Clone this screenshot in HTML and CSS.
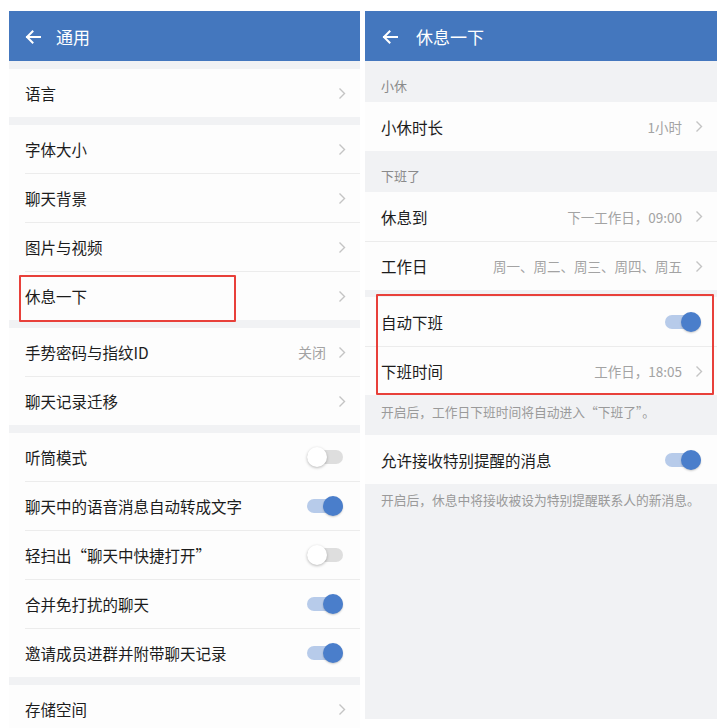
FILE: index.html
```html
<!DOCTYPE html>
<html lang="zh-CN">
<head>
<meta charset="utf-8">
<title>设置</title>
<link rel="stylesheet" href="styles.css">
</head>
<body>
<div class="screen">
  <section class="panel panel--left">
    <header class="appbar">
      <svg class="appbar-back" width="16" height="16" viewBox="0 0 16 16"><path d="M15 8H2M7.5 2.5L2 8l5.5 5.5" fill="none" stroke="#fff" stroke-width="2" stroke-linecap="square"/></svg>
      <span class="appbar-title">通用</span>
    </header>

    <div class="group">
      <div class="row"><span class="label">语言</span><svg class="chev" width="8" height="13" viewBox="0 0 8 13"><polyline points="1.5,1.5 6.5,6.5 1.5,11.5" fill="none" stroke="#c4c4c4" stroke-width="1.4"/></svg></div>
    </div>

    <div class="group">
      <div class="row"><span class="label">字体大小</span><svg class="chev" width="8" height="13" viewBox="0 0 8 13"><polyline points="1.5,1.5 6.5,6.5 1.5,11.5" fill="none" stroke="#c4c4c4" stroke-width="1.4"/></svg></div>
      <div class="row"><span class="label">聊天背景</span><svg class="chev" width="8" height="13" viewBox="0 0 8 13"><polyline points="1.5,1.5 6.5,6.5 1.5,11.5" fill="none" stroke="#c4c4c4" stroke-width="1.4"/></svg></div>
      <div class="row"><span class="label">图片与视频</span><svg class="chev" width="8" height="13" viewBox="0 0 8 13"><polyline points="1.5,1.5 6.5,6.5 1.5,11.5" fill="none" stroke="#c4c4c4" stroke-width="1.4"/></svg></div>
      <div class="row row--marked"><span class="label">休息一下</span><svg class="chev" width="8" height="13" viewBox="0 0 8 13"><polyline points="1.5,1.5 6.5,6.5 1.5,11.5" fill="none" stroke="#c4c4c4" stroke-width="1.4"/></svg><div class="mark mark--row"></div></div>
    </div>

    <div class="group">
      <div class="row"><span class="label">手势密码与指纹ID</span><span class="value">关闭</span><svg class="chev" width="8" height="13" viewBox="0 0 8 13"><polyline points="1.5,1.5 6.5,6.5 1.5,11.5" fill="none" stroke="#c4c4c4" stroke-width="1.4"/></svg></div>
      <div class="row"><span class="label">聊天记录迁移</span><svg class="chev" width="8" height="13" viewBox="0 0 8 13"><polyline points="1.5,1.5 6.5,6.5 1.5,11.5" fill="none" stroke="#c4c4c4" stroke-width="1.4"/></svg></div>
    </div>

    <div class="group">
      <div class="row"><span class="label">听筒模式</span><span class="switch"><span class="knob"></span></span></div>
      <div class="row"><span class="label">聊天中的语音消息自动转成文字</span><span class="switch switch--on"><span class="knob"></span></span></div>
      <div class="row"><span class="label">轻扫出“聊天中快捷打开”</span><span class="switch"><span class="knob"></span></span></div>
      <div class="row"><span class="label">合并免打扰的聊天</span><span class="switch switch--on"><span class="knob"></span></span></div>
      <div class="row"><span class="label">邀请成员进群并附带聊天记录</span><span class="switch switch--on"><span class="knob"></span></span></div>
    </div>

    <div class="group">
      <div class="row"><span class="label">存储空间</span><svg class="chev" width="8" height="13" viewBox="0 0 8 13"><polyline points="1.5,1.5 6.5,6.5 1.5,11.5" fill="none" stroke="#c4c4c4" stroke-width="1.4"/></svg></div>
    </div>
  </section>

  <section class="panel panel--right">
    <header class="appbar">
      <svg class="appbar-back" width="16" height="16" viewBox="0 0 16 16"><path d="M15 8H2M7.5 2.5L2 8l5.5 5.5" fill="none" stroke="#fff" stroke-width="2" stroke-linecap="square"/></svg>
      <span class="appbar-title">休息一下</span>
    </header>

    <div class="section-label">小休</div>
    <div class="group group--flush">
      <div class="row"><span class="label">小休时长</span><span class="value">1小时</span><svg class="chev" width="8" height="13" viewBox="0 0 8 13"><polyline points="1.5,1.5 6.5,6.5 1.5,11.5" fill="none" stroke="#c4c4c4" stroke-width="1.4"/></svg></div>
    </div>

    <div class="section-label">下班了</div>
    <div class="group group--flush">
      <div class="row"><span class="label">休息到</span><span class="value">下一工作日，09:00</span><svg class="chev" width="8" height="13" viewBox="0 0 8 13"><polyline points="1.5,1.5 6.5,6.5 1.5,11.5" fill="none" stroke="#c4c4c4" stroke-width="1.4"/></svg></div>
      <div class="row"><span class="label">工作日</span><span class="value">周一、周二、周三、周四、周五</span><svg class="chev" width="8" height="13" viewBox="0 0 8 13"><polyline points="1.5,1.5 6.5,6.5 1.5,11.5" fill="none" stroke="#c4c4c4" stroke-width="1.4"/></svg></div>
    </div>

    <div class="group group--marked">
      <div class="row"><span class="label">自动下班</span><span class="switch switch--on"><span class="knob"></span></span></div>
      <div class="row"><span class="label">下班时间</span><span class="value">工作日，18:05</span><svg class="chev" width="8" height="13" viewBox="0 0 8 13"><polyline points="1.5,1.5 6.5,6.5 1.5,11.5" fill="none" stroke="#c4c4c4" stroke-width="1.4"/></svg></div>
      <div class="mark mark--group"></div>
    </div>
    <p class="help">开启后，工作日下班时间将自动进入“下班了”。</p>

    <div class="group group--flush">
      <div class="row"><span class="label">允许接收特别提醒的消息</span><span class="switch switch--on"><span class="knob"></span></span></div>
    </div>
    <p class="help help--tight">开启后，休息中将接收被设为特别提醒联系人的新消息。</p>
  </section>
</div>
</body>
</html>
```

FILE: styles.css
```css
* { box-sizing: border-box; }

html, body {
  margin: 0;
  padding: 0;
  background: #ffffff;
}

body {
  font-family: "Noto Sans CJK SC", "Noto Sans", sans-serif;
  color: #1c1c1c;
  width: 728px;
  height: 728px;
  overflow: hidden;
}

.screen {
  display: flex;
  gap: 5px;
  padding: 11px 0 0 9px;
  align-items: flex-start;
}

.panel {
  background: #f1f2f4;
  overflow: hidden;
  display: flex;
  flex-direction: column;
}

.panel--left {
  width: 351px;
  height: 717px;
}

.panel--right {
  width: 352px;
  height: 708px;
}

/* app bar */
.appbar {
  height: 50px;
  flex: none;
  background: #4477be;
  display: flex;
  align-items: center;
  padding-left: 16px;
  padding-top: 2px;
  color: #fff;
}

.appbar-back { flex: none; }

.appbar-title {
  margin-left: 15px;
  font-size: 17px;
  line-height: 20px;
}

.panel--right .appbar { padding-left: 17px; }
.panel--right .appbar-title { margin-left: 18px; }

/* groups and rows */
.group {
  background: #fdfdfd;
  margin-top: 8px;
  flex: none;
}

.group--flush { margin-top: 0; }

.row {
  position: relative;
  height: 48px;
  margin-left: 16px;
  padding-right: 14px;
  display: flex;
  align-items: center;
}

.row + .row {
  height: 49px;
  border-top: 1px solid #ececec;
}

.panel--right .row {
  margin-left: 0;
  padding-left: 16px;
  height: 49px;
}

.label {
  flex: 1;
  font-size: 15.5px;
  line-height: 20px;
  white-space: nowrap;
}

.value {
  font-size: 14px;
  color: #a3a3a3;
  margin-right: 12px;
  white-space: nowrap;
}

.panel--right .value {
  font-size: 13.5px;
  margin-right: 13px;
}

.chev { flex: none; }

/* switches */
.switch {
  flex: none;
  width: 36px;
  height: 14px;
  border-radius: 7px;
  background: #dedede;
  display: flex;
  align-items: center;
  margin-right: 3px;
}

.panel--right .switch { margin-right: 2px; }

.knob {
  width: 20px;
  height: 20px;
  border-radius: 50%;
  background: #ffffff;
  box-shadow: 0 1px 3px rgba(0, 0, 0, 0.28);
}

.switch--on {
  justify-content: flex-end;
  background: #b7cbea;
}

.switch--on .knob {
  background: #4a7ecb;
  box-shadow: 0 1px 2px rgba(0, 0, 0, 0.2);
}

/* section labels & help text */
.section-label {
  height: 41px;
  flex: none;
  padding: 17px 16px 0;
  font-size: 13px;
  line-height: 16px;
  color: #8a8a8a;
}

.help {
  margin: 0;
  height: 40px;
  flex: none;
  padding: 9px 16px 0;
  font-size: 12.75px;
  line-height: 16px;
  color: #9a9a9a;
  white-space: nowrap;
}

.help--tight { padding-top: 8px; }

/* red annotation boxes */
.group--marked {
  position: relative;
  margin-top: 7px;
}

.mark {
  position: absolute;
  border: 2px solid #e8403a;
  border-radius: 1px;
  pointer-events: none;
}

.mark--row {
  left: -6px;
  top: 3px;
  width: 217px;
  height: 47px;
}

.mark--group {
  left: 11px;
  right: 3px;
  top: -3px;
  bottom: 0;
}
```
